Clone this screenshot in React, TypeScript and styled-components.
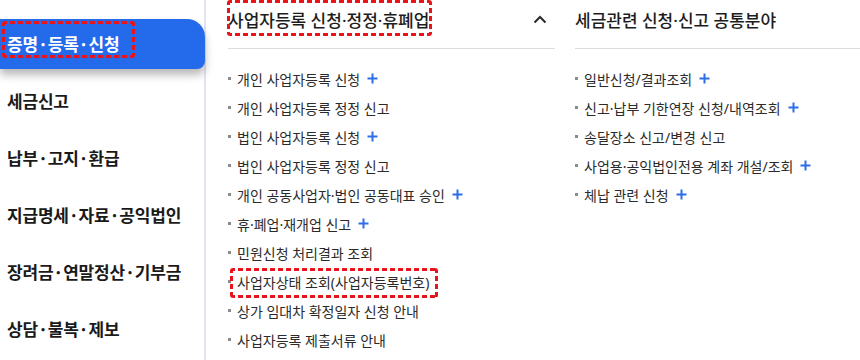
import React from 'react';
import styled, { createGlobalStyle } from 'styled-components';

const GlobalStyle = createGlobalStyle`
  html, body {
    margin: 0;
    padding: 0;
    background: #fff;
  }
  body {
    font-family: 'Noto Sans', 'Noto Sans CJK KR', sans-serif;
    color: #222;
  }
`;

const Page = styled.div`
  width: 860px;
  height: 360px;
  display: flex;
  overflow: hidden;
  background: #fff;
`;

const Sidebar = styled.nav`
  width: 204px;
  flex-shrink: 0;
  border-right: 2px solid #e4e2f7;
  padding-top: 19px;
  display: flex;
  flex-direction: column;
  gap: 7px;
`;

const SideItem = styled.div<{ $active?: boolean }>`
  position: relative;
  height: 50px;
  box-sizing: border-box;
  padding: 0 0 2px 7px;
  display: flex;
  align-items: center;
  font-family: 'Noto Sans CJK KR', sans-serif;
  font-size: 17px;
  font-weight: 700;
  letter-spacing: -0.2px;
  color: ${({ $active }) => ($active ? '#fff' : '#1a1a1a')};
  background: ${({ $active }) => ($active ? '#246beb' : 'transparent')};
  border-radius: ${({ $active }) => ($active ? '0 18px 8px 0' : '0')};
  box-shadow: ${({ $active }) => ($active ? '0 6px 8px rgba(0, 0, 0, 0.28)' : 'none')};
  margin-right: ${({ $active }) => ($active ? '-1px' : '0')};
`;

const Marked = styled.span`
  position: relative;
`;

const dash = (deg: number) =>
  `repeating-linear-gradient(${deg}deg, #e8141b 0 5px, transparent 5px 8px)`;

const MarkBox = styled.span<{ $top: number; $right: number; $bottom: number; $left: number }>`
  position: absolute;
  top: ${({ $top }) => $top}px;
  right: ${({ $right }) => $right}px;
  bottom: ${({ $bottom }) => $bottom}px;
  left: ${({ $left }) => $left}px;
  border-radius: 3px;
  pointer-events: none;
  background:
    ${dash(90)} left top / 100% 3px no-repeat,
    ${dash(90)} left bottom / 100% 3px no-repeat,
    ${dash(180)} left top / 3px 100% no-repeat,
    ${dash(180)} right top / 3px 100% no-repeat;
`;

const Main = styled.main`
  flex: 1;
  display: flex;
  gap: 20px;
  padding-left: 22px;
`;

const Column = styled.section<{ $width: number }>`
  width: ${({ $width }) => $width}px;
  flex-shrink: 0;
`;

const ColHead = styled.div`
  height: 39px;
  padding-bottom: 9px;
  border-bottom: 1px solid #dcdcdc;
  display: flex;
  align-items: center;
  justify-content: space-between;
  padding-right: 8px;
  font-size: 17px;
  font-weight: 500;
  color: #1d1d1d;
`;

const List = styled.ul`
  list-style: none;
  margin: 0;
  padding: 15px 0 0 0;
  display: flex;
  flex-direction: column;
`;

const Item = styled.li`
  height: 29px;
  display: flex;
  align-items: center;
  font-size: 14px;
  color: #2b2b2b;

  &::before {
    content: '';
    width: 3px;
    height: 3px;
    background: #8a8a8a;
    margin: 0 6px 0 0;
    flex-shrink: 0;
  }
`;

const Plus = styled.svg`
  margin-left: 7px;
  flex-shrink: 0;
`;

const PlusIcon = () => (
  <Plus width="11" height="11" viewBox="0 0 11 11">
    <path d="M5.5 0.5v10M0.5 5.5h10" stroke="#2c6ee8" strokeWidth="2" fill="none" />
  </Plus>
);

const Chevron = () => (
  <svg width="14" height="9" viewBox="0 0 14 9">
    <path d="M1.5 7.5L7 2l5.5 5.5" stroke="#2a2a2a" strokeWidth="2" fill="none" />
  </svg>
);

const sideMenu = ['증명·등록·신청', '세금신고', '납부·고지·환급', '지급명세·자료·공익법인', '장려금·연말정산·기부금', '상담·불복·제보'];

const leftItems: { label: string; plus?: boolean; marked?: boolean }[] = [
  { label: '개인 사업자등록 신청', plus: true },
  { label: '개인 사업자등록 정정 신고' },
  { label: '법인 사업자등록 신청', plus: true },
  { label: '법인 사업자등록 정정 신고' },
  { label: '개인 공동사업자·법인 공동대표 승인', plus: true },
  { label: '휴·폐업·재개업 신고', plus: true },
  { label: '민원신청 처리결과 조회' },
  { label: '사업자상태 조회(사업자등록번호)', marked: true },
  { label: '상가 임대차 확정일자 신청 안내' },
  { label: '사업자등록 제출서류 안내' },
];

const rightItems: { label: string; plus?: boolean }[] = [
  { label: '일반신청/결과조회', plus: true },
  { label: '신고·납부 기한연장 신청/내역조회', plus: true },
  { label: '송달장소 신고/변경 신고' },
  { label: '사업용·공익법인전용 계좌 개설/조회', plus: true },
  { label: '체납 관련 신청', plus: true },
];

export default function App() {
  return (
    <>
      <GlobalStyle />
      <Page>
        <Sidebar>
          {sideMenu.map((m, i) => (
            <SideItem key={m} $active={i === 0}>
              {i === 0 ? (
                <Marked>
                  {m}
                  <MarkBox $top={-10} $right={-16} $bottom={-2} $left={-5} />
                </Marked>
              ) : (
                m
              )}
            </SideItem>
          ))}
        </Sidebar>
        <Main>
          <Column $width={327}>
            <ColHead>
              <Marked>
                사업자등록 신청·정정·휴폐업
                <MarkBox $top={-7} $right={-3} $bottom={-4} $left={-1} />
              </Marked>
              <Chevron />
            </ColHead>
            <List>
              {leftItems.map((it) => (
                <Item key={it.label}>
                  {it.marked ? (
                    <Marked>
                      {it.label}
                      <MarkBox $top={-4} $right={-9} $bottom={-6} $left={-7} />
                    </Marked>
                  ) : (
                    it.label
                  )}
                  {it.plus && <PlusIcon />}
                </Item>
              ))}
            </List>
          </Column>
          <Column $width={300}>
            <ColHead>세금관련 신청·신고 공통분야</ColHead>
            <List>
              {rightItems.map((it) => (
                <Item key={it.label}>
                  {it.label}
                  {it.plus && <PlusIcon />}
                </Item>
              ))}
            </List>
          </Column>
        </Main>
      </Page>
    </>
  );
}
